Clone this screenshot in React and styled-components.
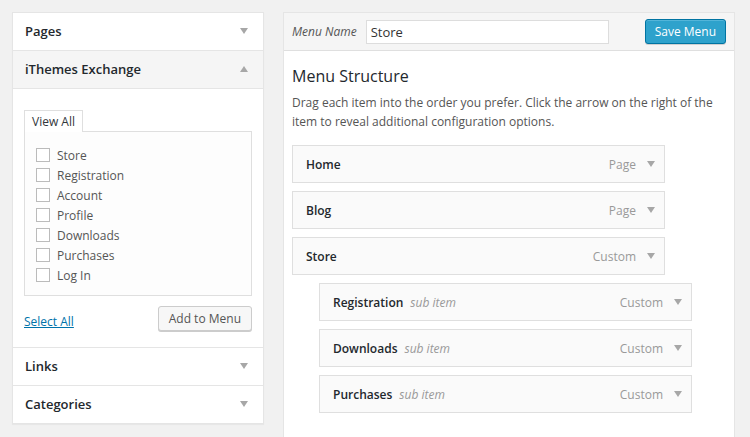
import React from "react";
import styled, { createGlobalStyle } from "styled-components";

const GlobalStyle = createGlobalStyle`
  html, body {
    margin: 0;
    padding: 0;
    background: #f1f1f1;
    overflow: hidden;
    font-family: "Open Sans", "Liberation Sans", sans-serif;
    font-size: 12px;
    color: #444;
  }
  * {
    box-sizing: border-box;
  }
`;

const Page = styled.div`
  display: flex;
  align-items: flex-start;
  gap: 19px;
  padding: 12px 0 0 12px;
`;

const Sidebar = styled.div`
  width: 252px;
  background: #fff;
  border: 1px solid #e5e5e5;
  box-shadow: 0 1px 1px rgba(0, 0, 0, 0.04);
`;

const Section = styled.div`
  border-bottom: 1px solid #e5e5e5;
  &:last-child {
    border-bottom: none;
  }
`;

const SectionHead = styled.div`
  height: ${(p) => (p.$open ? 38 : 37)}px;
  display: flex;
  align-items: center;
  justify-content: space-between;
  padding: 0 15px 2px 12px;
  background: ${(p) => (p.$open ? "#f5f5f5" : "#fff")};
  border-bottom: ${(p) => (p.$open ? "1px solid #e5e5e5" : "none")};
  font-size: 13px;
  font-weight: 600;
  color: #23282d;
`;

const SectionBody = styled.div`
  padding: 21px 11px 16px 11px;
`;

const Tab = styled.div`
  display: inline-block;
  height: 22px;
  line-height: 22px;
  padding: 0 7px;
  border: 1px solid #dfdfdf;
  border-bottom: none;
  background: #fff;
  color: #32373c;
  margin-bottom: -1px;
  position: relative;
`;

const TabPanel = styled.div`
  border: 1px solid #dfdfdf;
  background: #fdfdfd;
  padding: 13px 11px 10px;
`;

const CheckRow = styled.label`
  display: flex;
  align-items: center;
  gap: 7px;
  height: 20px;
  color: #555;
`;

const CheckBox = styled.span`
  width: 14px;
  height: 14px;
  border: 1px solid #bbb;
  background: #fff;
`;

const Actions = styled.div`
  display: flex;
  justify-content: space-between;
  align-items: center;
  margin-top: 10px;
`;

const TextLink = styled.a`
  color: #0073aa;
  text-decoration: underline;
  margin-top: 5px;
`;

const Button = styled.button`
  height: 25px;
  padding: 0 10px;
  font-family: inherit;
  font-size: 12px;
  color: #555;
  background: #f7f7f7;
  border: 1px solid #ccc;
  border-radius: 3px;
  box-shadow: 0 1px 0 #ccc;
`;

const PrimaryButton = styled(Button)`
  color: #fff;
  background: #2ea2cc;
  border-color: #0074a2;
  box-shadow: inset 0 1px 0 rgba(120, 200, 230, 0.5), 0 1px 0 rgba(0, 0, 0, 0.15);
  padding: 0 9px;
`;

const Editor = styled.div`
  width: 452px;
  background: #fff;
  border: 1px solid #e5e5e5;
`;

const EditorHead = styled.div`
  height: 38px;
  display: flex;
  align-items: center;
  padding: 0 8px;
  background: #f5f5f5;
  border-bottom: 1px solid #dfdfdf;
`;

const FieldLabel = styled.span`
  font-style: italic;
  color: #555;
  margin-right: 9px;
`;

const NameInput = styled.div`
  width: 243px;
  height: 24px;
  line-height: 22px;
  padding: 0 4px;
  border: 1px solid #ddd;
  background: #fff;
  color: #333;
  font-size: 13px;
  margin-right: auto;
`;

const EditorBody = styled.div`
  padding: 13px 8px 40px;
`;

const Heading = styled.h3`
  margin: 0;
  font-size: 16px;
  font-weight: 400;
  color: #23282d;
  line-height: 24px;
`;

const Description = styled.p`
  margin: 5px 0 14px;
  line-height: 19px;
  color: #555;
`;

const ItemList = styled.div`
  display: flex;
  flex-direction: column;
  gap: 8px;
`;

const Item = styled.div`
  width: 373px;
  height: 38px;
  margin-left: ${(p) => (p.$depth ? 27 : 0)}px;
  display: flex;
  align-items: center;
  padding: 0 9px 0 13px;
  background: #fafafa;
  border: 1px solid #dfdfdf;
`;

const ItemTitle = styled.span`
  font-weight: 600;
  color: #23282d;
`;

const SubNote = styled.span`
  font-style: italic;
  color: #999;
  margin-left: 7px;
`;

const ItemType = styled.span`
  margin-left: auto;
  color: #999;
  margin-right: 11px;
`;

const Arrow = ({ up }) => (
  <svg width="8" height="6" viewBox="0 0 8 6">
    <polygon points={up ? "0,6 8,6 4,0" : "0,0 8,0 4,6"} fill="#a7a7a7" />
  </svg>
);

const pages = ["Store", "Registration", "Account", "Profile", "Downloads", "Purchases", "Log In"];

const items = [
  { title: "Home", type: "Page" },
  { title: "Blog", type: "Page" },
  { title: "Store", type: "Custom" },
  { title: "Registration", type: "Custom", sub: true },
  { title: "Downloads", type: "Custom", sub: true },
  { title: "Purchases", type: "Custom", sub: true },
];

export default function App() {
  return (
    <>
      <GlobalStyle />
      <Page>
        <Sidebar>
          <Section>
            <SectionHead>
              Pages <Arrow />
            </SectionHead>
          </Section>
          <Section>
            <SectionHead $open>
              iThemes Exchange <Arrow up />
            </SectionHead>
            <SectionBody>
              <Tab>View All</Tab>
              <TabPanel>
                {pages.map((p) => (
                  <CheckRow key={p}>
                    <CheckBox />
                    {p}
                  </CheckRow>
                ))}
              </TabPanel>
              <Actions>
                <TextLink>Select All</TextLink>
                <Button>Add to Menu</Button>
              </Actions>
            </SectionBody>
          </Section>
          <Section>
            <SectionHead>
              Links <Arrow />
            </SectionHead>
          </Section>
          <Section>
            <SectionHead>
              Categories <Arrow />
            </SectionHead>
          </Section>
        </Sidebar>

        <Editor>
          <EditorHead>
            <FieldLabel>Menu Name</FieldLabel>
            <NameInput>Store</NameInput>
            <PrimaryButton>Save Menu</PrimaryButton>
          </EditorHead>
          <EditorBody>
            <Heading>Menu Structure</Heading>
            <Description>
              Drag each item into the order you prefer. Click the arrow on the right of the item to reveal additional
              configuration options.
            </Description>
            <ItemList>
              {items.map((it) => (
                <Item key={it.title} $depth={it.sub ? 1 : 0}>
                  <ItemTitle>{it.title}</ItemTitle>
                  {it.sub && <SubNote>sub item</SubNote>}
                  <ItemType>{it.type}</ItemType>
                  <Arrow />
                </Item>
              ))}
            </ItemList>
          </EditorBody>
        </Editor>
      </Page>
    </>
  );
}
